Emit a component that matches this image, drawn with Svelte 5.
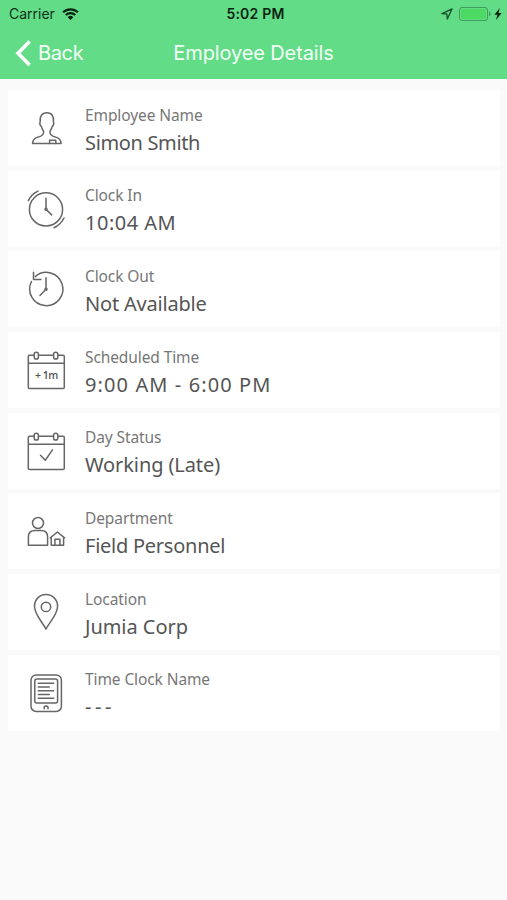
<script lang="ts">
  interface Detail {
    icon: string;
    label: string;
    value: string;
    tracking: number;
  }

  const details: Detail[] = [
    { icon: 'person', label: 'Employee Name', value: 'Simon Smith', tracking: -0.35 },
    { icon: 'clock-in', label: 'Clock In', value: '10:04 AM', tracking: 0.5 },
    { icon: 'clock-out', label: 'Clock Out', value: 'Not Available', tracking: -0.2 },
    { icon: 'schedule', label: 'Scheduled Time', value: '9:00 AM - 6:00 PM', tracking: 1.1 },
    { icon: 'status', label: 'Day Status', value: 'Working (Late)', tracking: -0.1 },
    { icon: 'department', label: 'Department', value: 'Field Personnel', tracking: -0.25 },
    { icon: 'location', label: 'Location', value: 'Jumia Corp', tracking: -0.05 },
    { icon: 'tablet', label: 'Time Clock Name', value: '---', tracking: 3.6 }
  ];
</script>

{#snippet calendar()}
  <path d="M7.9 5.2H3.6Q2.3 5.2 2.3 6.5v30.7q0 1.3 1.3 1.3h33.4q1.3 0 1.3-1.3V6.5q0-1.3-1.3-1.3h-4.7M12.6 5.2h14.8M2.3 13.2h36" />
  <rect x="8.2" y="2.2" width="4.2" height="6.8" rx="2.1" />
  <rect x="27.6" y="2.2" width="4.2" height="6.8" rx="2.1" />
{/snippet}

<main class="screen">
  <header class="header">
    <div class="status">
      <div class="status__side">
        <span class="status__carrier">Carrier</span>
        <svg class="status__wifi" viewBox="0 0 17 12" aria-hidden="true">
          <path d="M1.1 4.3a10.6 10.6 0 0 1 14.8 0M3.8 7a6.8 6.8 0 0 1 9.4 0" />
          <path class="solid" d="M8.5 11.9 5.7 9.2a4 4 0 0 1 5.6 0z" />
        </svg>
      </div>
      <span class="status__time">5:02 PM</span>
      <div class="status__side status__side--end">
        <svg class="status__arrow" viewBox="0 0 12 12" aria-hidden="true">
          <path d="M11 1 .9 5.6l5 .4.4 5z" />
        </svg>
        <svg class="status__battery" viewBox="0 0 32 14" aria-hidden="true">
          <rect class="shell" x=".5" y=".5" width="28" height="13" rx="2.5" />
          <rect class="charge" x="2" y="2" width="25" height="10" rx="1.2" />
          <path class="cap" d="M30 4.6q1.7.8 1.7 2.4T30 9.4z" />
        </svg>
        <svg class="status__bolt" viewBox="0 0 8 12" aria-hidden="true">
          <path d="M5.8 0 .4 6.8h3L2 12l5.6-7H4.5z" />
        </svg>
      </div>
    </div>

    <nav class="nav">
      <button class="nav__back">
        <svg viewBox="0 0 17 27" aria-hidden="true">
          <path d="M14.6 1.6 3 13.3 14.6 25" />
        </svg>
        <span>Back</span>
      </button>
      <h1 class="nav__title">Employee Details</h1>
    </nav>
  </header>

  <ul class="details">
    {#each details as detail (detail.label)}
      <li class="detail">
        <svg class="detail__icon" viewBox="0 0 40 40" aria-hidden="true">
          {#if detail.icon === 'person'}
            <path d="M6.5 35.5c.2-3.6 1.2-4.9 4-5.9l4.3-1.5c2.5-1 3.5-3.2 2.4-5.7-1-1.2-1.5-2.5-1.8-4-1.5-.8-2-3.4-1.2-4.8-.6-5.3 1.6-8.800 6.600-8.800s7.200 3.500 6.600 8.800c.8 1.400.3 4-1.200 4.800-.3 1.500-.8 2.800-1.800 4-1.100 2.500-.1 4.700 2.400 5.700l4.300 1.500c2.800 1 3.800 2.300 4 5.900z" />
            <path d="M23.6 35.5v-3.3h6.200v3.3" />
          {:else if detail.icon === 'clock-in'}
            <circle cx="20" cy="20.4" r="16.6" />
            <path d="M20 9.3v10.900l5.600 5.700M2.300 11.600A19.900 19.900 0 0 1 12 2.100M38 29A19.900 19.900 0 0 1 28 38.700" />
            <circle class="solid" cx="20" cy="20.3" r="1" />
          {:else if detail.icon === 'clock-out'}
            <path d="M5.5 12.500A16.600 16.600 0 1 0 9.300 7.600M7.500 3.200v7.200h7.400M20 8.700v11.500l-6 6.200" />
            <circle class="solid" cx="20" cy="20.3" r="1" />
          {:else if detail.icon === 'schedule'}
            {@render calendar()}
            <text x="20.3" y="28.5">+ 1m</text>
          {:else if detail.icon === 'status'}
            {@render calendar()}
            <path d="m14.500 24.300 4.800 5 7.200-10.400" />
          {:else if detail.icon === 'department'}
            <circle cx="12" cy="12" r="5.5" />
            <path d="M2.400 34.200v-8.200c0-4.400 3-6.400 6.600-6.400h6c3.600 0 6.600 2 6.600 6.400v8.200zM25.200 34.200v-8.200M37.600 34.200v-8.200M24.200 26.800l7.200-5.800 7.200 5.800M25.200 34.200h12.400M28.900 34.200v-6h5v6" />
          {:else if detail.icon === 'location'}
            <path d="M20 37.200C17 30.500 8.500 23 8.500 14.300 8.500 7.500 13.500 2.600 20 2.600s11.600 4.900 11.600 11.700C31.600 23 23 30.500 20 37.200z" />
            <circle cx="20" cy="14.9" r="4.7" />
          {:else}
            <rect x="5" y="2" width="30.4" height="36.4" rx="5.2" />
            <rect x="8.8" y="6" width="22.8" height="24" rx="2" />
            <path d="M12.300 10.300h15.400M12.300 14.100h11M12.300 17.800h15.400M12.300 21.500h11M12.300 25.200h15.400M18.200 35.700v-1.200q0-1.500 1.900-1.500t1.900 1.500v1.200" />
          {/if}
        </svg>
        <div class="detail__copy">
          <span class="detail__label">{detail.label}</span>
          <span class="detail__value" style:letter-spacing="{detail.tracking}px">{detail.value}</span>
        </div>
      </li>
    {/each}
  </ul>
</main>

<style>
  :global(body) {
    margin: 0;
    background: #fafafa;
  }

  .screen {
    min-height: 900px;
    background: #fafafa;
    font-family: 'Noto Sans', sans-serif;
  }

  .header {
    height: 79px;
    background: #62dc87;
    font-family: Inter, 'Liberation Sans', sans-serif;
  }

  .status {
    display: grid;
    grid-template-columns: 1fr auto 1fr;
    align-items: center;
    height: 27px;
    padding: 0 5px 0 9px;
    color: #10301a;
    font-size: 14px;
  }

  .status__side {
    display: flex;
    align-items: center;
    gap: 7px;
  }

  .status__side--end {
    justify-content: flex-end;
    gap: 6px;
  }

  .status__time {
    color: #0b2412;
    font-weight: 600;
    letter-spacing: 0.2px;
  }

  .status__wifi {
    width: 17px;
    height: 12px;
    fill: none;
    stroke: #0b2412;
    stroke-width: 2.3;
  }

  .status__wifi .solid {
    fill: #0b2412;
    stroke: none;
  }

  .status__arrow {
    width: 12px;
    height: 12px;
    fill: none;
    stroke: #1c5530;
    stroke-width: 1.4;
    stroke-linejoin: round;
  }

  .status__battery {
    width: 32px;
    height: 14px;
  }

  .shell {
    fill: none;
    stroke: #429a5c;
  }

  .charge {
    fill: #4cd964;
  }

  .cap {
    fill: #429a5c;
  }

  .status__bolt {
    width: 8px;
    height: 12px;
    margin-left: -3px;
    fill: #0b2412;
  }

  .nav {
    display: grid;
    grid-template-columns: 1fr auto 1fr;
    align-items: center;
    height: 52px;
    padding: 0 15px;
    color: #f4fff7;
  }

  .nav__back {
    display: flex;
    align-items: center;
    gap: 6px;
    padding: 0;
    border: 0;
    background: none;
    color: inherit;
    font: inherit;
    font-size: 20px;
    letter-spacing: -0.35px;
  }

  .nav__back svg {
    width: 17px;
    height: 27px;
    fill: none;
    stroke: #fff;
    stroke-width: 3.6;
  }

  .nav__title {
    margin: 0;
    font-size: 20px;
    font-weight: 400;
    letter-spacing: -0.12px;
  }

  .details {
    display: flex;
    flex-direction: column;
    gap: 4.7px;
    margin: 0;
    padding: 11px 7px 0 8px;
    list-style: none;
  }

  .detail {
    display: flex;
    align-items: center;
    box-sizing: border-box;
    height: 76px;
    padding-left: 18px;
    background: #fff;
  }

  .detail__icon {
    flex: none;
    width: 40px;
    height: 40px;
    fill: none;
    stroke: #666;
    stroke-width: 1.5;
    stroke-linejoin: round;
    stroke-linecap: round;
  }

  .detail__icon .solid {
    fill: #666;
  }

  .detail__icon text {
    fill: #555;
    stroke: none;
    font-family: 'Open Sans', sans-serif;
    font-size: 10.5px;
    font-weight: 600;
    letter-spacing: -0.5px;
    text-anchor: middle;
  }

  .detail__copy {
    display: flex;
    flex-direction: column;
    margin-left: 19px;
    padding-top: 3px;
    white-space: nowrap;
  }

  .detail__label {
    color: #777;
    font-size: 15.5px;
    letter-spacing: -0.1px;
    line-height: 25px;
  }

  .detail__value {
    color: #555;
    font-size: 20px;
    line-height: 29px;
  }
</style>
